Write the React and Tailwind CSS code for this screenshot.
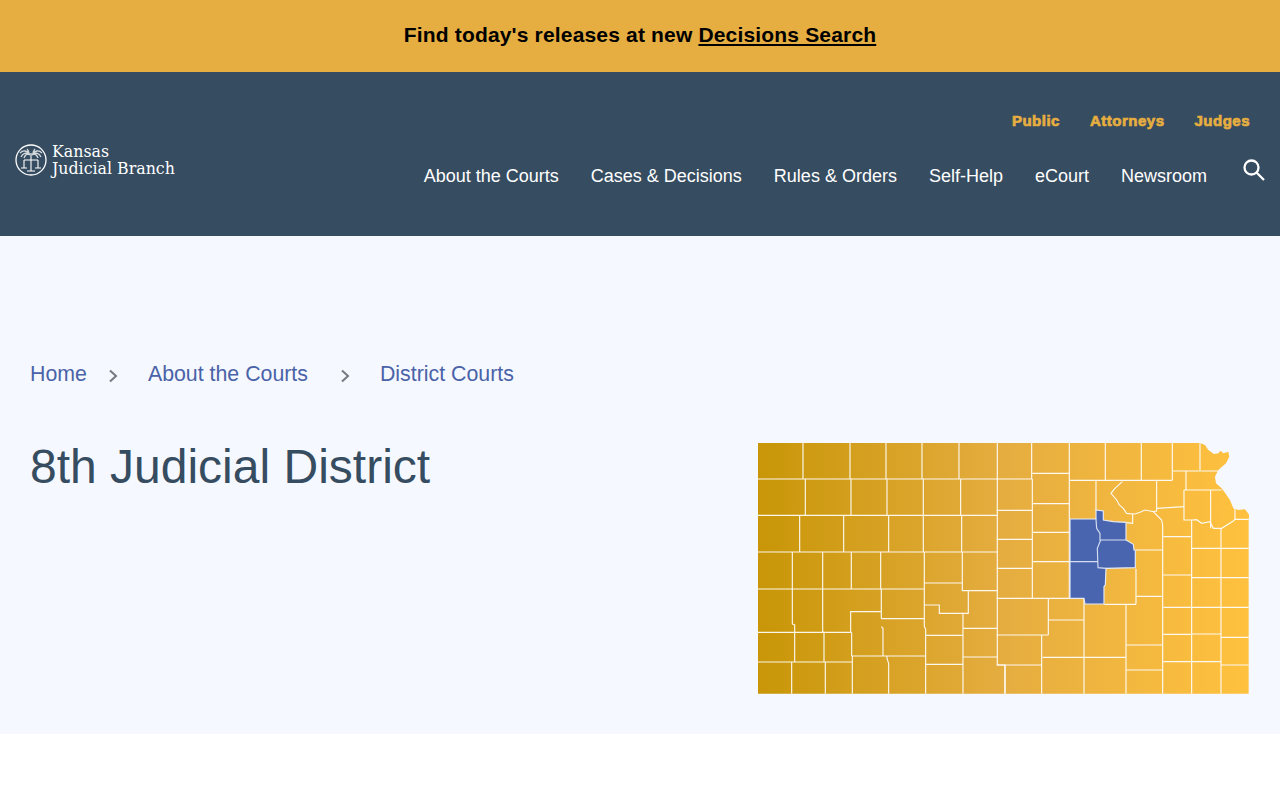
const NAV = ['About the Courts', 'Cases & Decisions', 'Rules & Orders', 'Self-Help', 'eCourt', 'Newsroom'];
const TOP_NAV = ['Public', 'Attorneys', 'Judges'];

// map coordinates are 3x the page, so a stroke of 3 is one page pixel
const WEST_LINES = [
  'M24 132H742M24 241H742M24 351H742M24 462H523M24 592H304M24 681H306',
  'M159 24V132M300 24V132M408 24V132M516 24V132M627 24V132',
  'M166 132V241M303 132V241M411 132V241M520 132V241M632 132V241',
  'M149 241V351M281 241V351M416 241V351M520 241V351M635 241V351',
  'M127 351V567L134 570V681M218 351V590L222 592V681M304 351V462M392 351V462',
  'M394 462V551M302 592V530H394M305 592V663M394 551H523M394 575L399 580V663M305 663H527',
  'M523 351V575L527 582V776M523 444H637M637 351V467H742M655 467V535H568V510H523',
  'M639 535V776M527 601H639M527 688H639M639 580H742M639 666H742',
  'M125 681V776M226 681V776M307 663V776M411 663V670L416 685V776',
  'M742 24V690H765V776',
];

const EAST_LINES = [
  'M95 24V132M97 132V490M208 24V490M316 24V136M424 24V136M517 24V136M600 24V105',
  'M-10 132H97M97 115H208M208 136H517M517 108H655M-10 226H97M-10 313H97M-10 400H97M-10 490H252',
  'M97 206H208M97 292H208M97 380H208',
  'M288 136V228M367 140L345 160L333 175L350 195L358 210L370 220L380 235L398 237V265L380 263',
  'M398 237L405 237L420 232L435 225L450 228L460 230L470 228V136M460 230L485 255L488 270V776',
  'M558 108V165M552 165V255L575 255L590 254L605 265L630 260L640 280L665 280L700 258L705 253H746',
  'M470 220L552 215M552 165H665M632 165V280M705 220V253',
  'M490 305H575M575 255V776M490 420H575M490 517H575M490 598H575M490 680H575',
  'M663 280V776M575 340H746M575 428H746M575 517H746M575 597H663M663 607H746M575 680H663M663 690H746',
  'M408 345H488M408 402V508M408 484H488M380 630H488M380 705H488M378 508V776',
  'M252 490V776M313 508H408M145 490V600M145 555H252M-10 600H145M125 600V776M128 667H378M-10 690H125M15 690V776',
];

function KansasMap() {
  return (
    <svg viewBox="758 443 491 251" className="w-[491px] h-[251px] shrink-0">
      <defs>
        <linearGradient id="ks" x1="0" y1="0" x2="1" y2="0">
          <stop offset="0" stopColor="#c89607" />
          <stop offset="0.5" stopColor="#e5ad40" />
          <stop offset="1" stopColor="#ffc13e" />
        </linearGradient>
      </defs>
      <g transform="translate(1000 435) scale(0.3333)">
        <path fill="url(#ks)" d="M-726 24H600L615 30L625 45L642 57L655 55L662 47L670 55L685 50L688 65L678 85L655 105L645 125L648 145L665 160L678 178L690 195L700 220L715 225L735 223L748 240L746 253V776H-726Z" />
      </g>
      <g transform="translate(750 435) scale(0.3333)" fill="none" stroke="#fff" strokeWidth="3.5" opacity="0.92">
        {WEST_LINES.map((d, i) => <path key={i} d={d} />)}
      </g>
      <g transform="translate(1000 435) scale(0.3333)">
        <g fill="none" stroke="#fff" strokeWidth="3.5" opacity="0.92">
          {EAST_LINES.map((d, i) => <path key={i} d={d} />)}
        </g>
        <path fill="#4a65b0" stroke="#e4eaf6" strokeWidth="3.5" d="M210 252H288V225L310 228V255L340 260L378 262V315L400 328L402 345H406V398L318 400L316 450L312 455V507H255L252 490H210Z" />
        <path fill="none" stroke="#d3ddf0" strokeWidth="3.5" d="M288 252L290 280L300 295V315H378M302 315L292 340L294 398L318 400M210 380H292" />
      </g>
    </svg>
  );
}

function Logo() {
  return (
    <svg viewBox="0 0 32 32" className="w-8 h-8 shrink-0" fill="none" stroke="#fff">
      <circle cx="16" cy="16" r="15" strokeWidth="1.3" />
      <path strokeWidth="1.3" opacity="0.8" d="M15 11C12 6 8 6 5 9M15 11C11 8 8 9 6 13M15 11C12 9 10 11 9 14M17 11C20 6 24 6 27 9M17 11C21 8 24 9 26 13M17 11C20 9 22 11 23 14M14 10C14 8 13 6 12 5M18 10C18 8 19 6 20 5" />
      <path strokeWidth="1.1" d="M16 9V27M9 16H23M9 16V24M23 16V24M12 27H20M6 24H12M20 24H26" />
    </svg>
  );
}

export default function App() {
  return (
    <div className="min-h-[800px] bg-white font-['Liberation_Sans',Arial,sans-serif]">
      <div className="h-[72px] pb-[2px] bg-[#e6ae40] flex items-center justify-center text-[21px] font-bold tracking-[0.17px] text-black">
        <p>Find today's releases at new <a href="#" className="underline">Decisions Search</a></p>
      </div>

      <header className="h-[164px] bg-[#364c60] flex items-center justify-between pl-[15px] pr-[14px]">
        <a href="#" className="flex items-center gap-[5px] mt-[12px]">
          <Logo />
          <span className="font-['DejaVu_Serif',serif] text-[15.8px] leading-[17px] text-white">
            Kansas<br />Judicial Branch
          </span>
        </a>
        <div className="flex flex-col items-end mt-[-8px]">
          <div className="flex gap-[30px] pr-[16px] text-[15px] font-bold tracking-[0.5px] text-[#e6ae40] [-webkit-text-stroke:0.7px_#e6ae40]">
            {TOP_NAV.map(t => <a href="#" key={t}>{t}</a>)}
          </div>
          <div className="flex items-center mt-[30px] text-[18px] text-white">
            <nav className="flex gap-[32px]">
              {NAV.map(t => <a href="#" key={t}>{t}</a>)}
            </nav>
            <svg viewBox="0 0 24 24" className="w-6 h-6 ml-[35px] mt-[-12px]" fill="none" stroke="#fff" strokeWidth="2.3">
              <circle cx="9.5" cy="9.5" r="7" />
              <path d="M14.5 14.5L22 22" />
            </svg>
          </div>
        </div>
      </header>

      <main className="h-[498px] bg-[#f5f8fe] pl-[30px] pr-[31px] pt-[125px]">
        <nav className="flex items-center text-[21.33px] leading-[26px] text-[#4a62a8]">
          <a href="#">Home</a>
          <svg viewBox="0 0 12 16" className="w-3 h-4 ml-[20px] mr-[29px] mt-[4px]" fill="none" stroke="#74797f" strokeWidth="2"><path d="M3 2.5L9 8L3 13.5" /></svg>
          <a href="#">About the Courts</a>
          <svg viewBox="0 0 12 16" className="w-3 h-4 ml-[31px] mr-[29px] mt-[4px]" fill="none" stroke="#74797f" strokeWidth="2"><path d="M3 2.5L9 8L3 13.5" /></svg>
          <a href="#">District Courts</a>
        </nav>
        <div className="flex justify-between items-start mt-[56px]">
          <h1 className="mt-[-5px] text-[48px] leading-[58px] text-[#364c60]">8th Judicial District</h1>
          <KansasMap />
        </div>
      </main>
    </div>
  );
}
